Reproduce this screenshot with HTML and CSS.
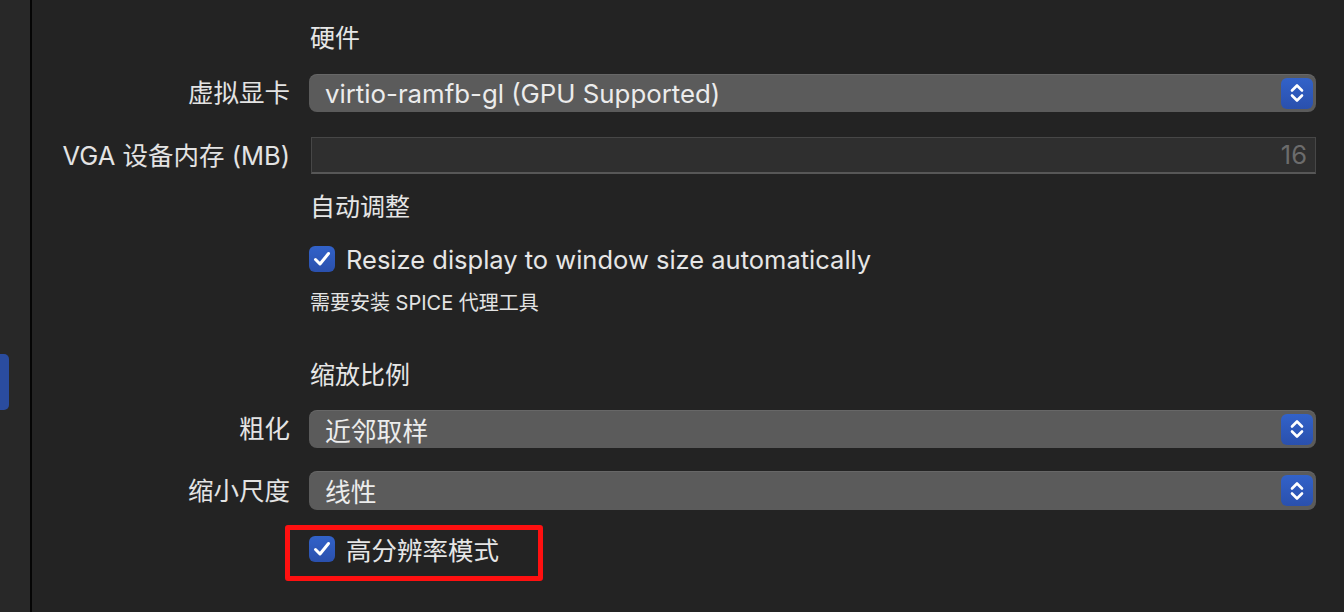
FILE: index.html
```html
<!DOCTYPE html>
<html lang="zh-CN">
<head>
<meta charset="utf-8">
<title>Display settings</title>
<link rel="stylesheet" href="styles.css">
</head>
<body>
<div class="window">
  <aside class="sidebar">
    <div class="sel-pill"></div>
  </aside>
  <div class="divider"></div>
  <main class="content">
    <div class="row r-hw"><span></span><h2 class="section">硬件</h2></div>

    <div class="row r-gpu">
      <label class="label">虚拟显卡</label>
      <div class="popup">
        <span class="popup-text">virtio-ramfb-gl (GPU Supported)</span>
        <span class="stepper">
          <svg width="16" height="22" viewBox="0 0 16 22"><path d="M3 8.5 L8 3.5 L13 8.5 M3 13.5 L8 18.5 L13 13.5" fill="none" stroke="#fff" stroke-width="2.6" stroke-linecap="round" stroke-linejoin="round"/></svg>
        </span>
      </div>
    </div>

    <div class="row r-vga">
      <label class="label">VGA 设备内存 (MB)</label>
      <div class="field">16</div>
    </div>

    <div class="row r-auto"><span></span><h2 class="section">自动调整</h2></div>

    <div class="row r-resize">
      <span></span>
      <div class="check">
        <span class="box"><svg width="18" height="16" viewBox="0 0 18 16"><path d="M2.5 8.5 L7 13 L15.5 2.5" fill="none" stroke="#fff" stroke-width="3" stroke-linecap="round" stroke-linejoin="round"/></svg></span>
        <span class="check-text">Resize display to window size automatically</span>
      </div>
    </div>

    <div class="row r-note"><span></span><p class="note">需要安装 SPICE 代理工具</p></div>

    <div class="row r-scale"><span></span><h2 class="section">缩放比例</h2></div>

    <div class="row r-up">
      <label class="label">粗化</label>
      <div class="popup">
        <span class="popup-text">近邻取样</span>
        <span class="stepper">
          <svg width="16" height="22" viewBox="0 0 16 22"><path d="M3 8.5 L8 3.5 L13 8.5 M3 13.5 L8 18.5 L13 13.5" fill="none" stroke="#fff" stroke-width="2.6" stroke-linecap="round" stroke-linejoin="round"/></svg>
        </span>
      </div>
    </div>

    <div class="row r-down">
      <label class="label">缩小尺度</label>
      <div class="popup">
        <span class="popup-text">线性</span>
        <span class="stepper">
          <svg width="16" height="22" viewBox="0 0 16 22"><path d="M3 8.5 L8 3.5 L13 8.5 M3 13.5 L8 18.5 L13 13.5" fill="none" stroke="#fff" stroke-width="2.6" stroke-linecap="round" stroke-linejoin="round"/></svg>
        </span>
      </div>
    </div>

    <div class="row r-hidpi">
      <span></span>
      <div class="check highlighted">
        <span class="box"><svg width="18" height="16" viewBox="0 0 18 16"><path d="M2.5 8.5 L7 13 L15.5 2.5" fill="none" stroke="#fff" stroke-width="3" stroke-linecap="round" stroke-linejoin="round"/></svg></span>
        <span class="check-text">高分辨率模式</span>
      </div>
    </div>
  </main>
</div>
</body>
</html>
```

FILE: styles.css
```css
*, *::before, *::after { box-sizing: border-box; }
html, body {
  margin: 0;
  padding: 0;
  width: 1344px;
  height: 612px;
  overflow: hidden;
  background: #232323;
  font-family: "Inter", "Noto Sans CJK SC", sans-serif;
  color: #e3e3e3;
}
.window {
  display: flex;
  height: 612px;
}
.sidebar {
  width: 30px;
  background: #282828;
  position: relative;
  flex: none;
}
.sel-pill {
  position: absolute;
  left: 0;
  top: 354px;
  width: 9px;
  height: 56px;
  background: #2a4c9f;
  border-radius: 0 5px 5px 0;
}
.divider {
  width: 2px;
  background: #050505;
  flex: none;
}
.content {
  flex: 1;
  padding: 20px 28px 0 0;
}
.row {
  display: grid;
  grid-template-columns: 258px 1fr;
  column-gap: 19px;
  align-items: center;
}
.r-hw { height: 36px; }
.r-gpu { height: 38px; margin-top: 18px; }
.r-vga { height: 37px; margin-top: 25px; }
.r-auto { height: 36px; margin-top: 15px; }
.r-resize { height: 36px; margin-top: 16px; }
.r-note { height: 26px; margin-top: 10px; }
.r-scale { height: 36px; margin-top: 44px; }
.r-up { height: 38px; margin-top: 17px; }
.r-down { height: 39px; margin-top: 23px; }
.r-hidpi { height: 36px; margin-top: 20px; }

.section {
  margin: 0;
  font-size: 25px;
  font-weight: 400;
  line-height: 36px;
  color: #e6e6e6;
  padding-left: 1px;
}
.label {
  text-align: right;
  font-size: 25.5px;
  line-height: 36px;
  color: #e3e3e3;
  white-space: nowrap;
}
.popup {
  height: 100%;
  background: #5b5b5b;
  border-radius: 8px;
  box-shadow: inset 0 1px 0 rgba(255,255,255,0.08);
  display: flex;
  align-items: center;
  justify-content: space-between;
  padding: 0 3px 0 16px;
}
.popup-text {
  font-size: 25.8px;
  color: #ececec;
  white-space: nowrap;
}
.stepper {
  width: 32px;
  height: 31px;
  border-radius: 6px;
  background: linear-gradient(#3262c9, #2a50ad);
  display: flex;
  align-items: center;
  justify-content: center;
}
.field {
  height: 100%;
  margin-left: 2px;
  background: #2f2f2f;
  border: 1px solid #474747;
  border-bottom: 2px solid #575757;
  text-align: right;
  padding-right: 8px;
  font-size: 25.5px;
  line-height: 34px;
  color: #6c6c6c;
}
.check {
  display: flex;
  align-items: center;
  gap: 11px;
  position: relative;
  justify-self: start;
}
.box {
  width: 26px;
  height: 26px;
  border-radius: 6px;
  background: linear-gradient(#3262c9, #2a50ad);
  display: flex;
  align-items: center;
  justify-content: center;
  flex: none;
}
.check-text {
  font-size: 25.5px;
  color: #e6e6e6;
  white-space: nowrap;
}
.note {
  margin: 0;
  font-size: 20px;
  color: #e3e3e3;
  padding-left: 1px;
  white-space: nowrap;
}
.highlighted::after {
  content: "";
  position: absolute;
  left: -24px;
  top: -5px;
  width: 258px;
  height: 56px;
  border: 5px solid #ff1010;
  border-radius: 3px;
}
```
